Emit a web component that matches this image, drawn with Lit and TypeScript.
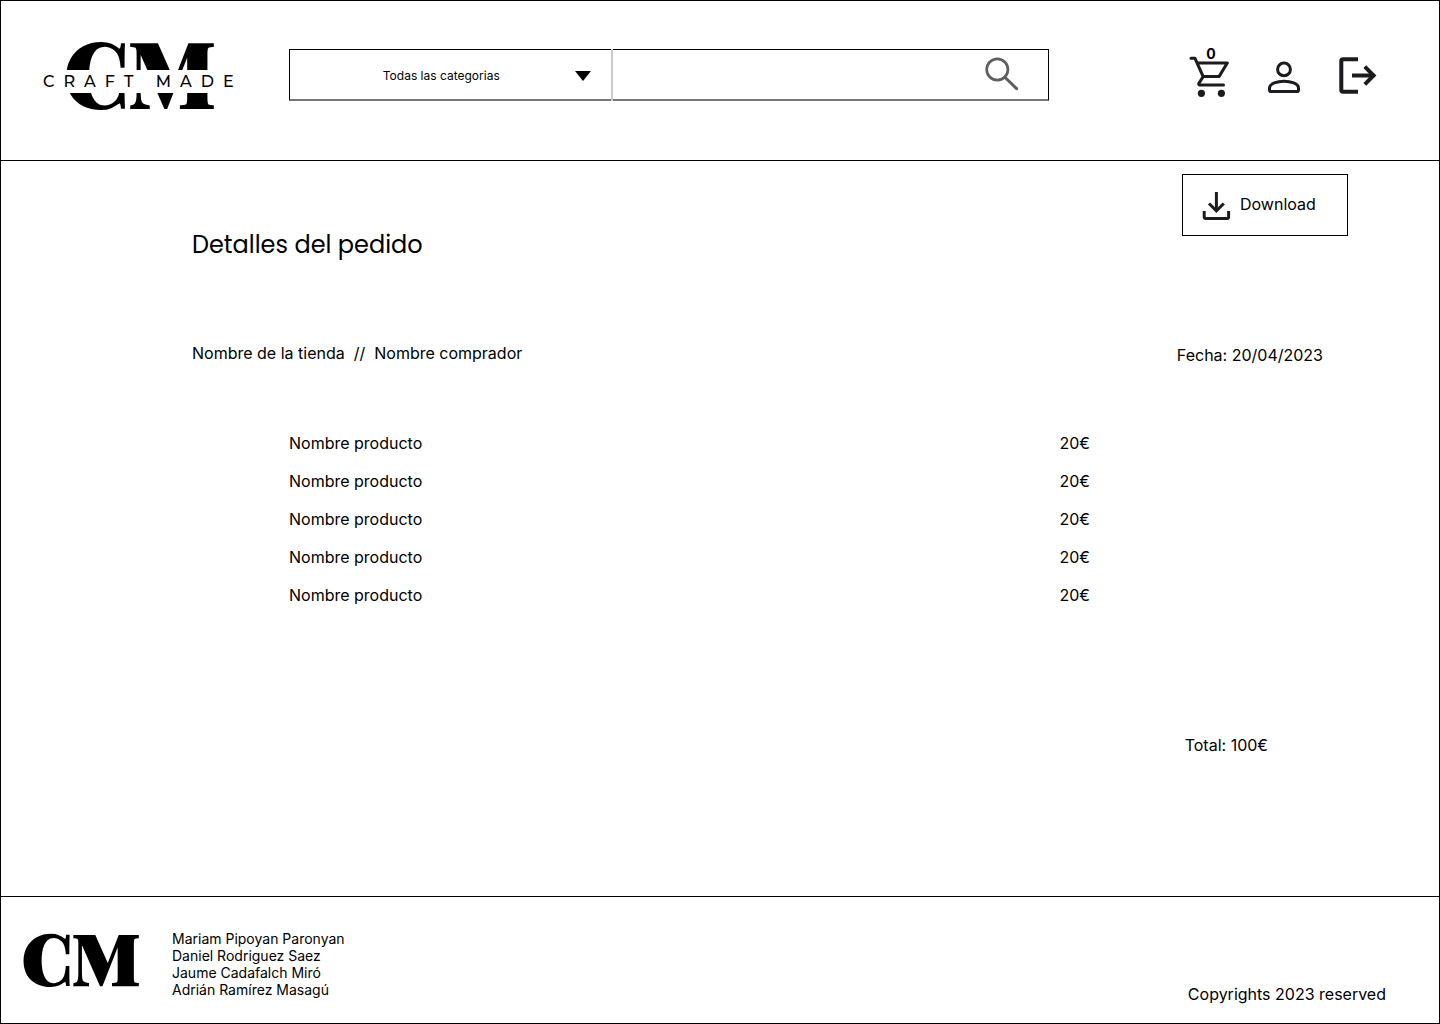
import { LitElement, html, css, svg } from "lit";
import { customElement, property, state } from "lit/decorators.js";

interface OrderLine {
  name: string;
  price: number;
}

const cartIcon = svg`<svg class="icon" viewBox="9 9 40 52" width="40" height="52" aria-hidden="true">
  <g fill="none" stroke="#1c1b1f" stroke-width="3" stroke-linejoin="round" stroke-linecap="round">
    <path d="M11 18.300H15L23.200 36.600H39L47.300 23H17.500"/>
    <path d="M23.200 36.600L18.900 43.200Q18.100 45 20 45H43.500"/>
  </g>
  <circle cx="21.400" cy="53.300" r="3.600" fill="#1c1b1f"/>
  <circle cx="41.400" cy="53.300" r="3.600" fill="#1c1b1f"/>
</svg>`;

const personIcon = svg`<svg class="icon" viewBox="88 9 32 52" width="32" height="52" aria-hidden="true">
  <g fill="none" stroke="#1c1b1f" stroke-width="3">
    <circle cx="104" cy="29.400" r="6.400"/>
    <path d="M89.500 48.200C89.500 43.600 97.500 41.200 104 41.200S118.500 43.600 118.500 48.200V50Q118.500 51.600 116.900 51.600H91.100Q89.500 51.600 89.500 50Z"/>
  </g>
</svg>`;

const logoutIcon = svg`<svg class="icon" viewBox="159 9 38 52" width="38" height="52" aria-hidden="true">
  <g fill="none" stroke="#1c1b1f" stroke-width="4">
    <path d="M178 19.200H163Q161.300 19.200 161.300 20.900V50.100Q161.300 51.800 163 51.800H178"/>
    <path d="M172 35.500H193"/>
    <path d="M184.800 26.700L193.600 35.500L184.800 44.300"/>
  </g>
</svg>`;

const downloadIcon = svg`<svg class="icon" viewBox="32 23 30 32" width="30" height="32" aria-hidden="true">
  <g fill="none" stroke="#1c1b1f" stroke-width="3">
    <path d="M46.400 27V45.500"/>
    <path d="M39 38.500L46.400 45.900L53.800 38.500"/>
    <path d="M34.200 46V52Q34.200 53.500 35.700 53.500H57.100Q58.600 53.500 58.600 52V46"/>
  </g>
</svg>`;

const searchIcon = svg`<svg class="icon" viewBox="24 17 36 36" width="36" height="36" aria-hidden="true">
  <g fill="none" stroke="#5f5f62" stroke-width="2.700">
    <circle cx="37.300" cy="29.500" r="10.600"/>
    <path d="M44.900 37.200L56.600 48.600" stroke-width="3" stroke-linecap="round"/>
  </g>
</svg>`;

@customElement("cm-logo")
export class CmLogo extends LitElement {
  @property({ type: Boolean }) full = false;

  static styles = css`
    :host { display: block; flex: none; }
    .logo { display: block; overflow: visible; }
    .mark { font-family: "Playfair Display", "Liberation Serif", serif; font-weight: 900; stroke: #000; stroke-width: 2; }
    .mark-large { font-size: 90px; }
    .mark-small { font-size: 70px; }
    .tagline { font-family: Montserrat, Inter, sans-serif; font-size: 16px; font-weight: 500; letter-spacing: 9px; }
  `;

  render() {
    return this.full
      ? html`<svg class="logo" viewBox="0 0 194 76" width="194" height="76" role="img" aria-label="Craft Made">
          <text class="mark mark-large" x="22" y="71">CM</text>
          <rect x="0" y="33" width="194" height="23" fill="#fff"></rect>
          <text class="tagline" x="1" y="50">CRAFT MADE</text>
        </svg>`
      : html`<svg class="logo" viewBox="0 0 120 54" width="120" height="54" role="img" aria-label="CM">
          <text class="mark mark-small" x="-1" y="55">CM</text>
        </svg>`;
  }
}

@customElement("cm-search")
export class CmSearch extends LitElement {
  @state() private query = "";

  static styles = css`
    :host { display: block; flex: 1; min-width: 0; }
    * { box-sizing: border-box; }
    .box { display: grid; grid-template-columns: 20fr 27fr; height: 52px; border: 1px solid #000; border-bottom: 2px solid #777; }
    .category { display: grid; align-items: center; border-right: 2px solid #ccc; margin: -1px 0 -2px; }
    .select, .arrow { grid-area: 1 / 1; }
    .select { appearance: none; width: 100%; height: 100%; border: 0; padding: 2px 18px 0 0; background: transparent; color: #000; font: 12px/16px Inter, sans-serif; text-align: center; text-align-last: center; }
    .arrow { justify-self: end; margin: 2px 20px 0 0; pointer-events: none; }
    .field { display: flex; min-width: 0; }
    .input { flex: 1; min-width: 0; border: 0; padding: 0 16px; background: transparent; font: 16px/20px Inter, sans-serif; }
    .submit { border: 0; padding: 0 28px 0 0; background: none; cursor: pointer; }
    .icon { display: block; }
  `;

  render() {
    return html`<form class="box" role="search" @submit=${(e: Event) => e.preventDefault()}>
      <div class="category">
        <select class="select" aria-label="Categoria">
          <option>Todas las categorias</option>
        </select>
        <svg class="arrow" viewBox="0 0 16 10" width="16" height="10" aria-hidden="true"><path d="M0 0H16L8 10Z"/></svg>
      </div>
      <div class="field">
        <input class="input" type="search" aria-label="Buscar" .value=${this.query}
          @input=${(e: Event) => (this.query = (e.target as HTMLInputElement).value)}>
        <button class="submit" type="submit" aria-label="Buscar">${searchIcon}</button>
      </div>
    </form>`;
  }
}

@customElement("app-root")
export class AppRoot extends LitElement {
  @state() private cartCount = 0;

  private lines: OrderLine[] = Array.from({ length: 5 }, () => ({ name: "Nombre producto", price: 20 }));

  private authors = ["Mariam Pipoyan Paronyan", "Daniel Rodriguez Saez", "Jaume Cadafalch Miró", "Adrián Ramírez Masagú"];

  static styles = css`
    :host { display: block; color: #000; background: #fff; font: 16px/20px Inter, sans-serif; }
    * { box-sizing: border-box; }
    .page { display: flex; flex-direction: column; min-height: 100vh; border: 1px solid #000; }
    .header { display: flex; align-items: center; padding: 36px 62px 47px 41px; border-bottom: 1px solid #000; }
    .search { margin: 0 140px 0 53px; }
    .actions { display: flex; gap: 39px; }
    .action { position: relative; display: block; }
    .icon { display: block; }
    .badge { position: absolute; top: -4px; left: 2px; width: 100%; text-align: center; color: #000; font-size: 14px; line-height: 18px; font-weight: 700; }
    .action, .action:visited { color: inherit; text-decoration: none; }
    .main { flex: 1; padding: 13px 0 20px 191px; }
    .top, .meta { display: flex; justify-content: space-between; align-items: flex-start; }
    .top { padding-right: 91px; }
    .title { margin: 56px 0 0; font: 400 24px/30px Poppins, Inter, sans-serif; }
    .download { display: flex; align-items: center; gap: 8px; width: 166px; height: 62px; padding: 0 0 2px 19px; border: 1px solid #000; background: #fff; color: #000; font: inherit; cursor: pointer; }
    .meta { margin-top: 83px; padding-right: 116px; }
    .parties { margin: 0; white-space: pre; }
    .date { margin: 0; line-height: 24px; }
    .table-area { padding: 57px 349px 0 97px; }
    .lines { width: 100%; border-collapse: collapse; }
    .cell { height: 38px; padding: 0; text-align: left; font-weight: 400; }
    .price { text-align: right; }
    .total { margin: 121px 171px 0 0; text-align: right; }
    .footer { display: flex; align-items: flex-start; padding: 33px 53px 19px 22px; border-top: 1px solid #000; }
    .authors { margin: 0 0 0 29px; padding: 0; list-style: none; font-size: 14px; line-height: 17px; }
    .copyright { flex: 1; align-self: flex-end; margin: 0; padding-top: 54px; text-align: right; }
  `;

  render() {
    const total = this.lines.reduce((sum, line) => sum + line.price, 0);
    return html`<div class="page">
      <header class="header">
        <cm-logo full></cm-logo>
        <cm-search class="search"></cm-search>
        <nav class="actions">
          <a class="action" href="#carrito" aria-label="Carrito">${cartIcon}<span class="badge">${this.cartCount}</span></a>
          <a class="action" href="#perfil" aria-label="Perfil">${personIcon}</a>
          <a class="action" href="#salir" aria-label="Salir">${logoutIcon}</a>
        </nav>
      </header>
      <main class="main">
        <div class="top">
          <h1 class="title">Detalles del pedido</h1>
          <button class="download" type="button">${downloadIcon}<span>Download</span></button>
        </div>
        <div class="meta">
          <p class="parties">Nombre de la tienda  //  Nombre comprador</p>
          <p class="date">Fecha: 20/04/2023</p>
        </div>
        <div class="table-area">
          <table class="lines" aria-label="Productos">
            <tbody>
              ${this.lines.map((line) => html`<tr>
                <th class="cell" scope="row">${line.name}</th>
                <td class="cell price">${line.price}€</td>
              </tr>`)}
            </tbody>
          </table>
        </div>
        <p class="total">Total: ${total}€</p>
      </main>
      <footer class="footer">
        <cm-logo></cm-logo>
        <ul class="authors">${this.authors.map((name) => html`<li>${name}</li>`)}</ul>
        <p class="copyright">Copyrights 2023 reserved</p>
      </footer>
    </div>`;
  }
}
